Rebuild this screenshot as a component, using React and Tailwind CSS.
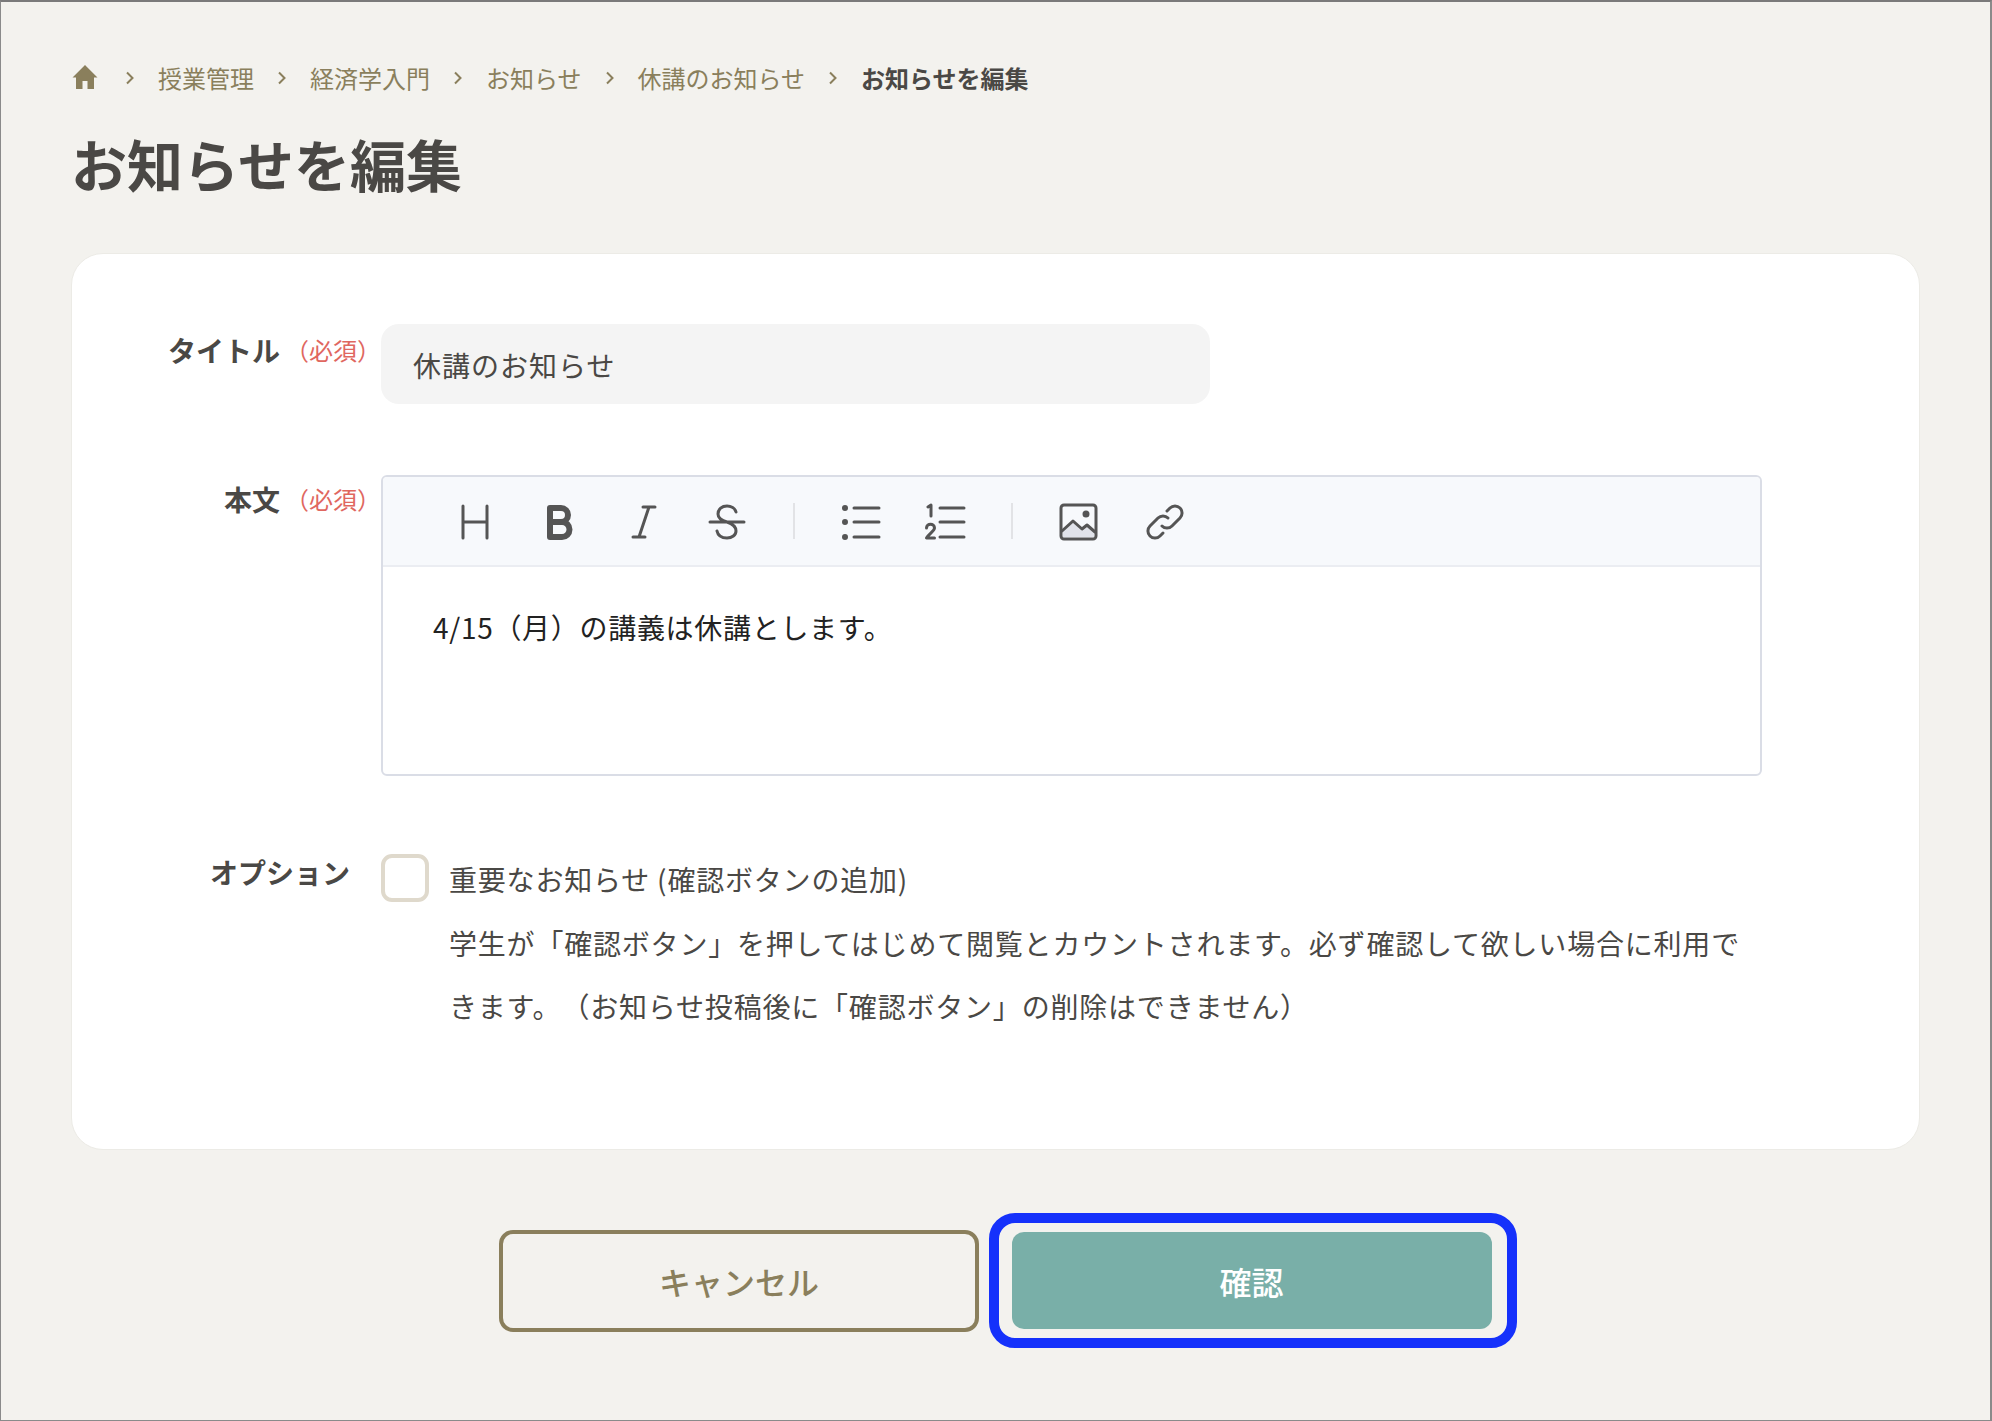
import React from "react";

const font = { fontFamily: '"Noto Sans CJK JP", "Noto Sans", sans-serif' };

const crumbs = ["授業管理", "経済学入門", "お知らせ", "休講のお知らせ"];

const Chevron = () => (
    <svg width="12" height="14" viewBox="0 0 12 14" fill="none" stroke="#8a7f5c" strokeWidth="2" className="mx-[22px] shrink-0">
        <path d="M3 1.5 8.5 7 3 12.5" />
    </svg>
);

const ToolIcon = ({ children }) => (
    <div className="w-[84px] h-full flex items-center justify-center pt-[2px]">
        <svg width="44" height="44" viewBox="0 0 44 44" fill="none" stroke="#555555" strokeWidth="3" strokeLinecap="round" strokeLinejoin="round">
            {children}
        </svg>
    </div>
);

const Required = () => <span className="text-[24px] text-[#e0675f] ml-[5px] whitespace-nowrap">（必須）</span>;

export default function App() {
    return (
        <div style={font} className="w-full h-[1421px] bg-[#f3f2ee] border-t-2 border-l border-r-2 border-b border-t-[#7a7a7a] border-l-[#8a8a8a] border-r-[#8a8a8a] border-b-[#8a8a8a] px-[70px] overflow-hidden [text-spacing-trim:space-all]">
            {/* breadcrumb */}
            <div className="flex items-center h-[36px] mt-[58px] text-[24px] text-[#8a7f5c]">
                <svg width="26" height="26" viewBox="0 0 26 26" fill="#8a7f5c" className="mr-[4px] ml-[1px] mb-[3px]">
                    <path d="M13 1 0.5 13.5H4V25h6.5v-8h5v8H22V13.500h3.500z" />
                </svg>
                <Chevron />
                {crumbs.map((c) => (
                    <React.Fragment key={c}>
                        <span>{c}</span>
                        <Chevron />
                    </React.Fragment>
                ))}
                <span className="font-bold text-[#4a4845]">お知らせを編集</span>
            </div>

            <h1 className="text-[56px] leading-[80px] font-bold text-[#4a4845] mt-[27px]">お知らせを編集</h1>

            {/* form card */}
            <div className="mt-[50px] w-[1849px] h-[897px] bg-white rounded-[32px] border border-[#ecebe6] pt-[70px] text-[#4a4845]">
                <div className="flex">
                    <div className="w-[309px] flex justify-end items-start pt-[8px]">
                        <span className="text-[28px] font-bold leading-[36px]">タイトル</span>
                        <Required />
                    </div>
                    <div className="w-[829px] h-[80px] bg-[#f4f4f4] rounded-[18px] flex items-center pl-[32px] pt-[2px] text-[28px] tracking-[1px]">
                        休講のお知らせ
                    </div>
                </div>

                <div className="flex mt-[71px]">
                    <div className="w-[309px] flex justify-end items-start pt-[6px]">
                        <span className="text-[28px] font-bold leading-[36px]">本文</span>
                        <Required />
                    </div>
                    <div className="w-[1381px] h-[301px] rounded-[6px] border-2 border-[#dadde6] overflow-hidden">
                        <div className="h-[90px] bg-[#f7f9fc] border-b-2 border-[#ebedf2] flex items-center pl-[50px]">
                            <ToolIcon>
                                <path d="M10 6v32M34 6v32M10 22h24" />
                            </ToolIcon>
                            <ToolIcon>
                                <path strokeWidth="6" d="M13 8h11a7 7 0 0 1 0 14H13zM13 22h12a7.500 7.500 0 0 1 0 15H13z" />
                            </ToolIcon>
                            <ToolIcon>
                                <path d="M22 7h12M12 37h12M28 7 18 37" />
                            </ToolIcon>
                            <ToolIcon>
                                <path d="M5 22h34M31 12c-1-4-5-6-9-6-5 0-9 3-9 8 0 3 2 6 9 8 6 2 9 5 9 9 0 4-4 7-9 7-5 0-9-2-10-7" />
                            </ToolIcon>
                            <div className="w-[2px] h-[36px] bg-[#e2e3e6] mx-[24px]" />
                            <ToolIcon>
                                <path d="M15 8h25M15 22h25M15 37h25" />
                                <circle cx="6" cy="8" r="1.500" fill="#555555" />
                                <circle cx="6" cy="22" r="1.500" fill="#555555" />
                                <circle cx="6" cy="37" r="1.500" fill="#555555" />
                            </ToolIcon>
                            <ToolIcon>
                                <path d="M17 8h24M17 22h24M17 37h24" />
                                <path strokeWidth="3" d="M5 7l3-2v11" />
                                <path strokeWidth="3" d="M3.500 28c0-5 8-5 8 0 0 3-6 6-8 10h8" />
                            </ToolIcon>
                            <div className="w-[2px] h-[36px] bg-[#e2e3e6] mx-[24px]" />
                            <ToolIcon>
                                <rect x="4" y="5" width="35" height="34" rx="3" />
                                <path fill="#e1e3ea" stroke="none" d="M6 32l10-11 8 8 5-4 8 7v5H6z" />
                                <path d="M5 31l11-10 9 8 5-4 8 7" />
                                <circle cx="29" cy="14" r="2" fill="#555555" />
                            </ToolIcon>
                            <div className="ml-[2px]">
                                <ToolIcon>
                                    <path d="M19 26a7 7 0 0 0 10 0l8-8a7 7 0 0 0-10-10l-3 3" />
                                    <path d="M25 18a7 7 0 0 0-10 0l-8 8a7 7 0 0 0 10 10l3-3" />
                                </ToolIcon>
                            </div>
                        </div>
                        <div className="pl-[50px] pt-[37px] text-[28px] leading-[46px] tracking-[0.7px] text-[#222222]">
                            4/15（月）の講義は休講とします。
                        </div>
                    </div>
                </div>

                <div className="flex mt-[78px]">
                    <div className="w-[278px] flex justify-end text-[28px] font-bold leading-[36px]">オプション</div>
                    <div className="w-[48px] h-[48px] ml-[31px] rounded-[11px] border-[4px] border-[#dfd9cc] bg-white shrink-0" />
                    <div className="w-[1300px] ml-[20px] text-[28px] leading-[63.500px] tracking-[0.8px] -mt-[6px]">
                        <div>重要なお知らせ (確認ボタンの追加)</div>
                        <div>学生が「確認ボタン」を押してはじめて閲覧とカウントされます。必ず確認して欲しい場合に利用できます。（お知らせ投稿後に「確認ボタン」の削除はできません）</div>
                    </div>
                </div>
            </div>

            {/* buttons */}
            <div className="flex items-center mt-[63px] pl-[428px]">
                <button style={font} className="w-[480px] h-[102px] rounded-[14px] border-[4px] border-[#8a7f5c] text-[32px] text-[#8a7f5c] font-medium">
                    キャンセル
                </button>
                <div className="ml-[10px] w-[528px] h-[135px] rounded-[26px] border-[10px] border-[#1531fb] flex items-center justify-center">
                    <button style={font} className="w-[480px] h-[97px] mr-[3px] rounded-[12px] bg-[#79afa8] text-white text-[32px] font-medium">
                        確認
                    </button>
                </div>
            </div>
        </div>
    );
}
